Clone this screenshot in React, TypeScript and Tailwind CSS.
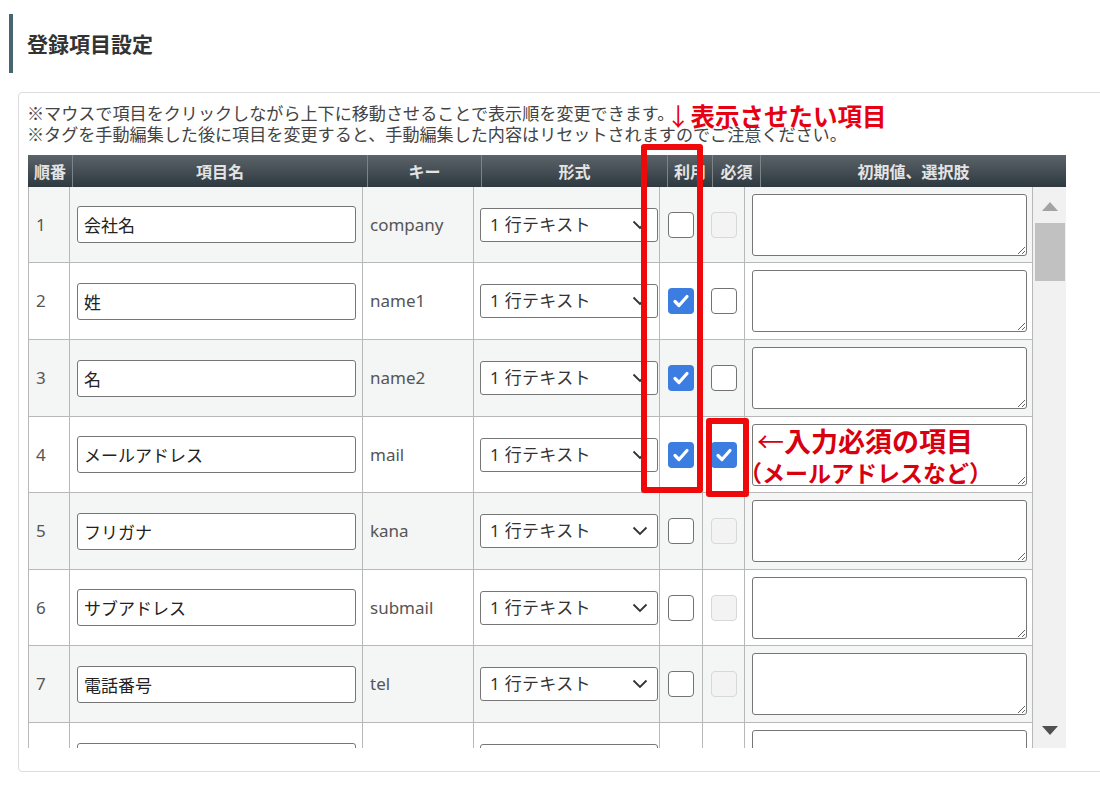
import React from "react";

type Row = {
  no: number;
  name: string;
  key: string;
  use: boolean;
  required: "on" | "off" | "disabled";
  bg: string;
  height: string;
};

const rows: Row[] = [
  { no: 1, name: "会社名", key: "company", use: false, required: "disabled", bg: "bg-[#f4f5f5]", height: "h-[76px]" },
  { no: 2, name: "姓", key: "name1", use: true, required: "off", bg: "bg-white", height: "h-[77px]" },
  { no: 3, name: "名", key: "name2", use: true, required: "off", bg: "bg-[#f4f5f5]", height: "h-[77px]" },
  { no: 4, name: "メールアドレス", key: "mail", use: true, required: "on", bg: "bg-white", height: "h-[76px]" },
  { no: 5, name: "フリガナ", key: "kana", use: false, required: "disabled", bg: "bg-[#f4f5f5]", height: "h-[77px]" },
  { no: 6, name: "サブアドレス", key: "submail", use: false, required: "disabled", bg: "bg-white", height: "h-[76px]" },
  { no: 7, name: "電話番号", key: "tel", use: false, required: "disabled", bg: "bg-[#f4f5f5]", height: "h-[77px]" },
  { no: 8, name: "郵便番号", key: "zip", use: false, required: "disabled", bg: "bg-white", height: "h-[77px]" },
];

const headers = [
  { label: "順番", w: "w-[45px]" },
  { label: "項目名", w: "w-[295px]" },
  { label: "キー", w: "w-[114px]" },
  { label: "形式", w: "w-[186px]" },
  { label: "利用", w: "w-[45px]" },
  { label: "必須", w: "w-[48px]" },
  { label: "初期値、選択肢", w: "w-[305px]" },
];

const Checkbox = ({ state }: { state: "on" | "off" | "disabled" }) => {
  if (state === "on") {
    return (
      <div className="flex h-[26px] w-[26px] items-center justify-center rounded-[4px] bg-[#3b7de0]">
        <svg width="20" height="20" viewBox="0 0 20 20" fill="none">
          <path d="M4 10.5l4 4L16 5.5" stroke="white" strokeWidth="3.2" strokeLinecap="round" strokeLinejoin="round" />
        </svg>
      </div>
    );
  }
  if (state === "disabled") {
    return <div className="h-[26px] w-[26px] rounded-[4px] border border-[#d8d8d8] bg-[#f3f3f3]" />;
  }
  return <div className="h-[26px] w-[26px] rounded-[4px] border-[1.5px] border-[#737373] bg-white" />;
};

const SelectBox = () => (
  <div className="flex h-[34px] w-[178px] shrink-0 items-center justify-between rounded-[3px] border border-[#767676] bg-white pl-[9px] pr-[9px] text-[17px] text-[#333]">
    <span className="tracking-[0.3px]">1 行テキスト</span>
    <svg width="16" height="10" viewBox="0 0 16 10" fill="none">
      <path d="M1.5 1.5L8 8l6.5-6.5" stroke="#333" strokeWidth="1.8" />
    </svg>
  </div>
);

export default function App() {
  return (
    <div className="relative h-[798px] w-[1100px] overflow-hidden bg-white font-['Noto_Sans','Noto_Sans_CJK_JP',sans-serif] text-[#333]">
      <div className="ml-[9px] mt-[14px] flex h-[59px] items-center border-l-4 border-[#4a6572] pl-[14px]">
        <h2 className="font-['Noto_Sans_CJK_JP',sans-serif] text-[21px] font-bold leading-none text-[#333]">登録項目設定</h2>
      </div>

      <div className="ml-[18px] mt-[19px] h-[680px] w-[1120px] rounded-[4px] border border-[#dcdcdc] pl-[9px] pt-[9px]">
        <div className="-ml-px font-['Noto_Sans_CJK_JP',sans-serif] text-[17.1px] leading-[21px] text-[#444]">
          <p>※マウスで項目をクリックしながら上下に移動させることで表示順を変更できます。</p>
          <p>※タグを手動編集した後に項目を変更すると、手動編集した内容はリセットされますのでご注意ください。</p>
        </div>

        <div className="mt-[11px] w-[1038px]">
          <div className="flex h-[32px] bg-linear-to-b from-[#5c6469] to-[#2e3940] font-['Noto_Sans_CJK_JP',sans-serif] text-[16px] font-bold text-[#e4e4e4]">
            {headers.map((h, i) => (
              <div
                key={h.label}
                className={`${h.w} flex items-center justify-center ${i < headers.length - 1 ? "border-r border-[#7b848a]" : ""}`}
              >
                {h.label}
              </div>
            ))}
          </div>

          <div className="flex h-[561px] overflow-hidden">
            <div className="w-[1005px] shrink-0">
              {rows.map((r) => (
                <div key={r.no} className={`flex ${r.height} ${r.bg} border-b border-[#b8b8b8]`}>
                  <div className="flex w-[42px] items-center border-x border-[#b8b8b8] pl-[7px] text-[17px] text-[#555]">
                    {r.no}
                  </div>
                  <div className="flex w-[293px] items-center border-r border-[#b8b8b8] pl-[7px]">
                    <input
                      readOnly
                      defaultValue={r.name}
                      className="h-[37px] w-[279px] rounded-[3px] border border-[#767676] bg-white px-[6px] font-['Noto_Sans_CJK_JP',sans-serif] text-[17px] text-[#222]"
                    />
                  </div>
                  <div className="flex w-[111px] items-center border-r border-[#b8b8b8] pl-[7px] text-[17px] text-[#555]">
                    {r.key}
                  </div>
                  <div className="flex w-[186px] items-center border-r border-[#b8b8b8] pl-[6px]">
                    <SelectBox />
                  </div>
                  <div className="flex w-[43px] items-center justify-center border-r border-[#b8b8b8]">
                    <Checkbox state={r.use ? "on" : "off"} />
                  </div>
                  <div className="flex w-[42px] items-center justify-center border-r border-[#b8b8b8]">
                    <Checkbox state={r.required} />
                  </div>
                  <div className="flex w-[288px] items-center border-r border-[#b8b8b8] pl-[7px]">
                    <textarea
                      readOnly
                      className="h-[62px] w-[275px] rounded-[3px] border border-[#767676] bg-white"
                    />
                  </div>
                </div>
              ))}
            </div>

            <div className="flex w-[33px] shrink-0 flex-col items-center bg-[#f1f1f1] pb-[13px] pt-[15px]">
              <svg width="16" height="9" viewBox="0 0 16 9">
                <path d="M8 0L16 9H0z" fill="#a3a3a3" />
              </svg>
              <div className="mt-[12px] h-[58px] w-[30px] bg-[#c1c1c1]" />
              <div className="flex-1" />
              <svg width="16" height="9" viewBox="0 0 16 9">
                <path d="M0 0h16L8 9z" fill="#505050" />
              </svg>
            </div>
          </div>
        </div>
      </div>

      {/* annotations */}
      <div className="absolute left-[666px] top-[101px] font-['Noto_Sans_CJK_JP',sans-serif] text-[24.5px] font-bold leading-[30px] text-[#e60012]">
        <span className="font-normal">↓</span>表示させたい項目
      </div>
      <div className="absolute left-[641px] top-[144px] h-[349px] w-[62px] rounded-[3px] border-[6px] border-[#ee0a0a]" />
      <div className="absolute left-[706px] top-[418px] h-[79px] w-[43px] rounded-[3px] border-[6px] border-[#ee0a0a]" />
      <div className="absolute left-[757px] top-[425px] font-['Noto_Sans_CJK_JP',sans-serif] font-bold text-[#d8000f]">
        <div className="text-[27px] leading-[32px]">
          <span className="font-normal">←</span>入力必須の項目
        </div>
        <div className="-ml-[18px] text-[23px] leading-[30px]">（メールアドレスなど）</div>
      </div>
    </div>
  );
}
